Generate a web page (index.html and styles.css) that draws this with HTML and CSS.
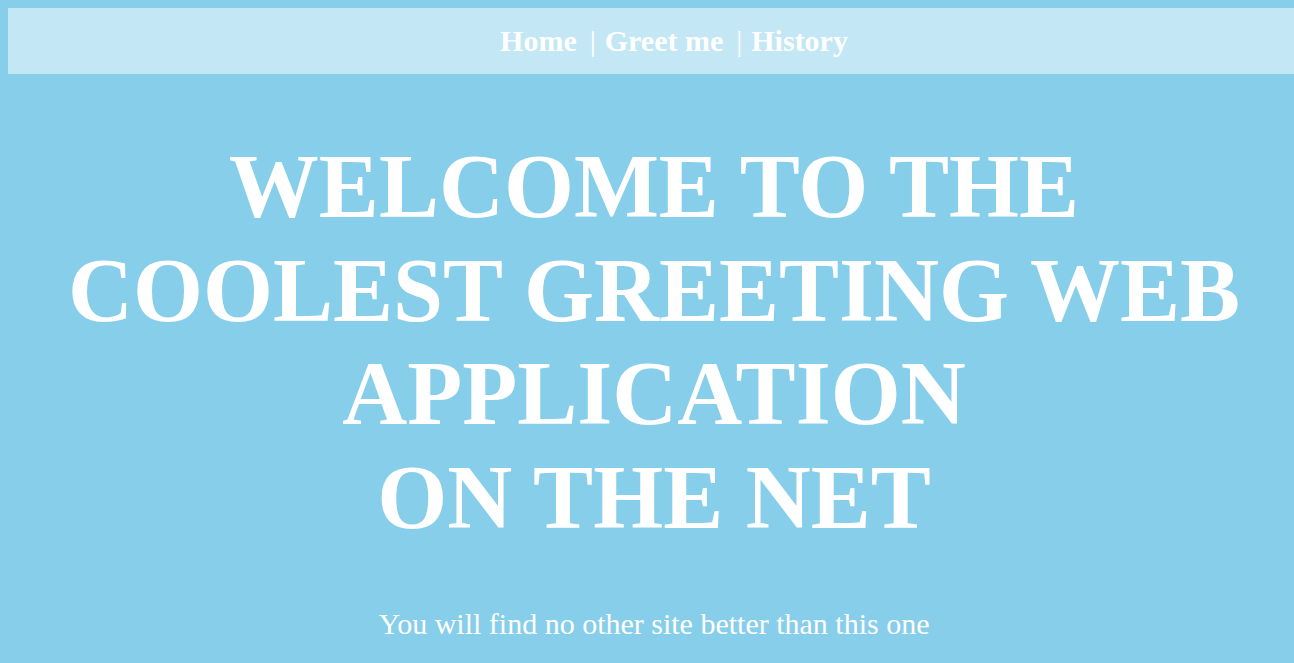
FILE: index.html
```html
<!DOCTYPE html>
<html lang="en">
<head>
<meta charset="utf-8">
<title>Greeting App</title>
<link rel="stylesheet" href="styles.css">
</head>
<body>
<div class="page">
  <nav class="nav">
    <ul class="nav-list">
      <li class="nav-item"><a class="nav-link" href="#">Home</a></li>
      <li class="nav-sep">|</li>
      <li class="nav-item"><a class="nav-link" href="#">Greet me</a></li>
      <li class="nav-sep">|</li>
      <li class="nav-item"><a class="nav-link" href="#">History</a></li>
    </ul>
  </nav>
  <main class="hero">
    <h1 class="hero-title">Welcome to the coolest greeting web application<br>on the net</h1>
    <p class="hero-sub">You will find no other site better than this one</p>
  </main>
</div>
</body>
</html>
```

FILE: styles.css
```css
body {
  margin: 8px 0 8px 8px;
  background: #87ceeb;
  font-family: "Liberation Serif", "Times New Roman", serif;
  color: #ffffff;
}
.nav {
  background: rgba(255, 255, 255, 0.5);
  height: 66px;
  display: flex;
  align-items: center;
}
.nav-list {
  list-style: none;
  margin: 0;
  padding: 0 0 0 46px;
  flex: 1;
  display: flex;
  justify-content: center;
  align-items: center;
  font-size: 30px;
  font-weight: bold;
}
.nav-link {
  color: #ffffff;
  text-decoration: none;
}
.nav-sep {
  font-weight: normal;
  margin: 0 9px 0 13px;
}
.hero {
  text-align: center;
  padding-left: 6px;
}
.hero-title {
  margin: 61px 0 0;
  font-size: 90px;
  line-height: 103.5px;
  text-transform: uppercase;
  font-weight: bold;
}
.hero-sub {
  margin: 58px 0 0;
  font-size: 30px;
}
```
